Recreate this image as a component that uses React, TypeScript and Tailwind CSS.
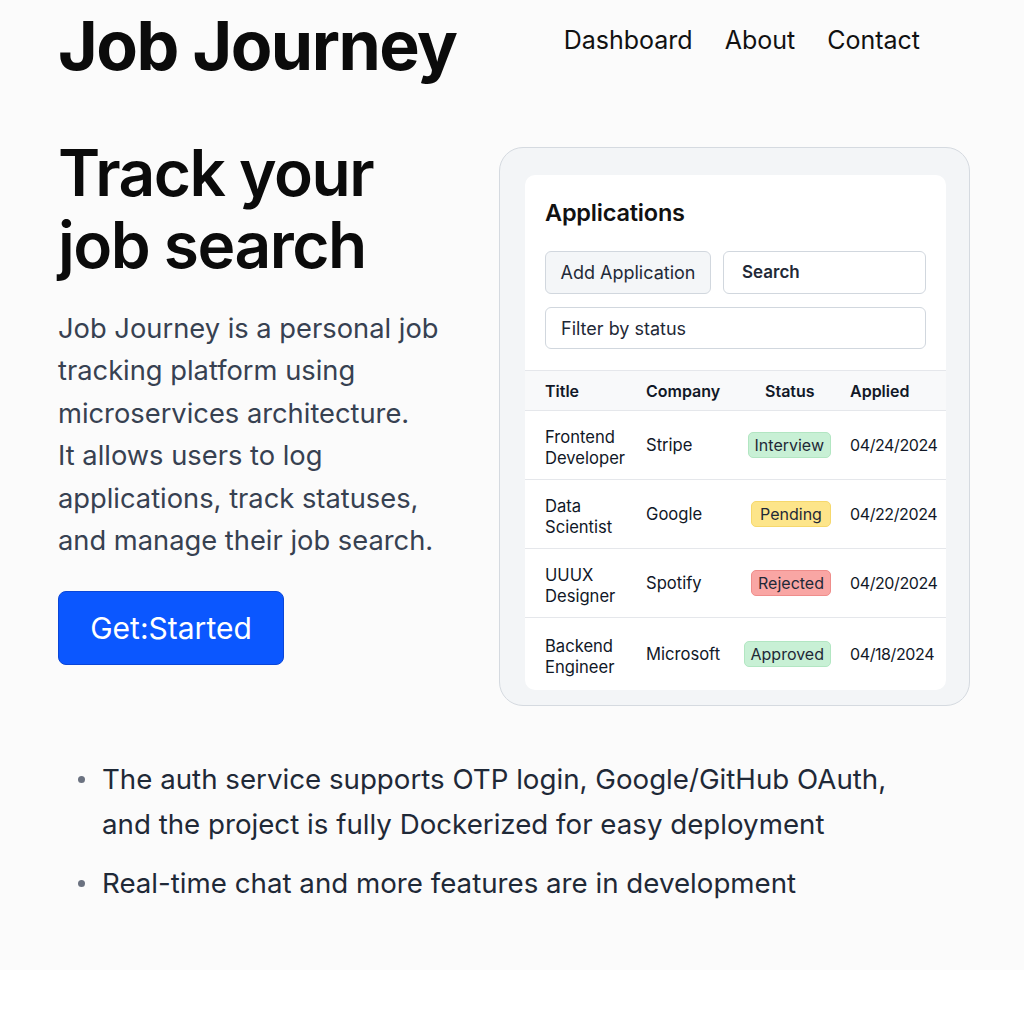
import React from "react";

type Row = {
  title: string[];
  company: string;
  status: string;
  applied: string;
};

const rows: Row[] = [
  { title: ["Frontend", "Developer"], company: "Stripe", status: "Interview", applied: "04/24/2024" },
  { title: ["Data", "Scientist"], company: "Google", status: "Pending", applied: "04/22/2024" },
  { title: ["UUUX", "Designer"], company: "Spotify", status: "Rejected", applied: "04/20/2024" },
  { title: ["Backend", "Engineer"], company: "Microsoft", status: "Approved", applied: "04/18/2024" },
];

const badgeClass: Record<string, string> = {
  Interview: "bg-[#c8f0d5] border-[#b2e6c2]",
  Pending: "bg-[#fde58a] border-[#f6d86c]",
  Rejected: "bg-[#f9a6a4] border-[#ef8d8b]",
  Approved: "bg-[#c8f0d5] border-[#b2e6c2]",
};

const StatusBadge = ({ status }: { status: string }) => (
  <span className={`inline-block min-w-[80px] text-center px-[6px] py-[1px] rounded-[5px] border text-[16px] leading-[22px] text-[#1f2937] ${badgeClass[status]}`}>
    {status}
  </span>
);

const ApplicationsCard = () => {
  return (
    <div className="w-[471px] rounded-[24px] border border-[#d5dae0] bg-[#f3f5f7] pl-[25px] pr-[23px] pt-[27px] pb-[15px]">
      <div className="rounded-[10px] bg-white overflow-hidden">
        <div className="px-[20px] pt-[24px] pb-[21px]">
          <h2 className="text-[23.5px] font-semibold text-[#111] leading-[28px] tracking-[-0.2px]">Applications</h2>
          <div className="flex gap-[12px] mt-[24px]">
            <button className="w-[166px] h-[43px] rounded-[6px] border border-[#d1d7de] bg-[#f4f6f8] text-[18px] text-[#1f2937]">
              Add Application
            </button>
            <div className="flex-1 h-[43px] rounded-[6px] border border-[#d1d7de] bg-white flex items-center px-[18px] text-[17px] font-semibold text-[#1f2937]">
              Search
            </div>
          </div>
          <div className="mt-[13px] h-[42px] rounded-[6px] border border-[#d1d7de] bg-white flex items-center px-[15px] text-[18px] text-[#1f2937]">
            Filter by status
          </div>
        </div>
        <div className="grid grid-cols-[101px_103px_101px_1fr] items-center h-[41px] bg-[#f8f9fa] border-y border-[#e5e7eb] pl-[20px] text-[16px] font-semibold text-[#111827]">
          <span>Title</span>
          <span>Company</span>
          <span className="pl-[16px]">Status</span>
          <span>Applied</span>
        </div>
        {rows.map((r, i) => (
          <div
            key={r.company}
            className={`grid grid-cols-[101px_84px_1fr_96px] items-center pl-[20px] text-[16.6px] text-[#111827] leading-[21px] ${i < rows.length - 1 ? "border-b border-[#e5e7eb] h-[69px]" : "h-[72px]"}`}
          >
            <span className="pt-[5px]">
              {r.title[0]}
              <br />
              {r.title[1]}
            </span>
            <span>{r.company}</span>
            <span className="text-right pr-[19px]">
              <StatusBadge status={r.status} />
            </span>
            <span className="text-[16px] tracking-[-0.4px]">{r.applied}</span>
          </div>
        ))}
      </div>
    </div>
  );
};

export default function App() {
  return (
    <div className="w-[1024px] min-h-[1024px] bg-white font-['Inter',sans-serif]">
      <div className="bg-[#fbfbfb] h-[970px] px-[58px]">
        <header className="flex items-start h-[90px]">
          <h1 className="mt-[4px] text-[68px] font-bold leading-[82px] tracking-[-1.5px] text-[#0b0b0b]">
            Job Journey
          </h1>
          <nav className="ml-auto mr-[46px] mt-[22px] flex gap-[32px] text-[25px] text-[#111]">
            <a>Dashboard</a>
            <a>About</a>
            <a>Contact</a>
          </nav>
        </header>

        <section className="flex justify-between mt-[57px]">
          <div className="w-[400px]">
            <h2 className="text-[64px] font-semibold leading-[72px] tracking-[-1.5px] text-[#0b0b0b] -mt-[10px]">
              Track your
              <br />
              job search
            </h2>
            <p className="mt-[27px] w-[395px] text-[27.3px] leading-[42.4px] text-[#374151]">
              Job Journey is a personal job tracking platform using microservices architecture.
              <br />
              It allows users to log applications, track statuses, and manage their job search.
            </p>
            <button className="mt-[29px] w-[226px] h-[74px] rounded-[8px] bg-[#0b57ff] border border-[#0a46d8] text-white text-[30px]">
              Get:Started
            </button>
          </div>
          <div className="-mr-[4px]">
            <ApplicationsCard />
          </div>
        </section>

        <ul className="mt-[51px] pl-[20px] text-[27.7px] text-[#1f2937]">
          <li className="flex gap-[17px] leading-[45px]">
            <span className="mt-[19px] w-[7px] h-[7px] rounded-full bg-[#6b7280] shrink-0" />
            <span>
              The auth service supports OTP login, Google/GitHub OAuth,
              <br />
              and the project is fully Dockerized for easy deployment
            </span>
          </li>
          <li className="flex gap-[17px] leading-[45px] mt-[14px]">
            <span className="mt-[19px] w-[7px] h-[7px] rounded-full bg-[#6b7280] shrink-0" />
            <span>Real-time chat and more features are in development</span>
          </li>
        </ul>
      </div>
    </div>
  );
}
